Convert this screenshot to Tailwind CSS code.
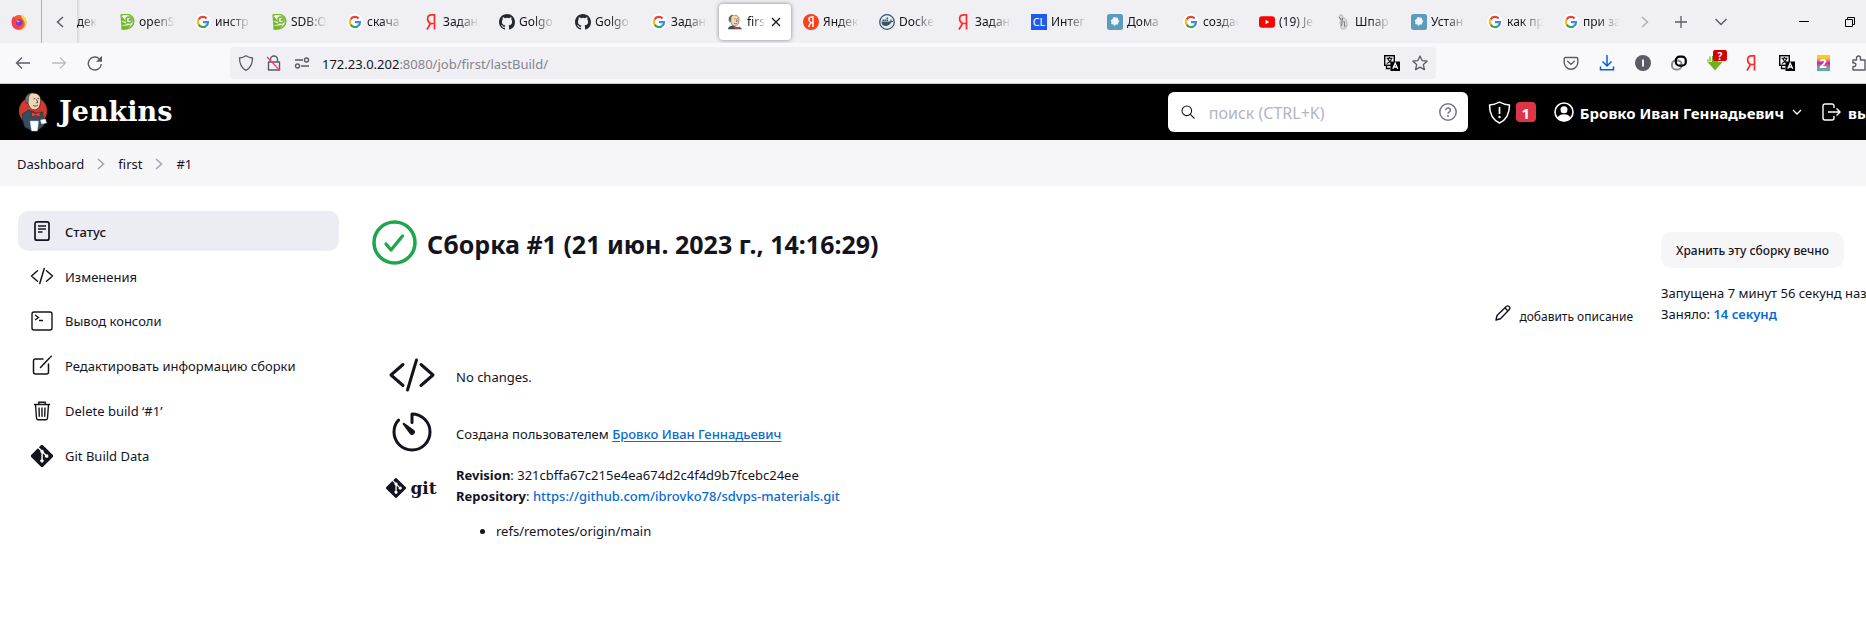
<!DOCTYPE html>
<html lang="ru">
<head>
<meta charset="utf-8">
<title>first #1 [Jenkins]</title>
<script src="https://cdn.jsdelivr.net/npm/@tailwindcss/browser@4"></script>
</head>
<body class="min-h-screen overflow-x-hidden bg-white font-['Noto_Sans',sans-serif] text-[13px] leading-[21px] text-[#14141f]">

<!-- Shared icon definitions -->
<svg class="hidden">
  <symbol id="google" viewBox="0 0 16 16"><circle cx="8" cy="8" r="8" fill="#fff"/><g fill="none" stroke-width="2.2"><path d="M3.7 5.3A5 5 0 0 1 11.6 4.5" stroke="#ea4335"/><path d="M3.7 5.3a5 5 0 0 0 0 5.3" stroke="#fbbc05"/><path d="M3.7 10.6a5 5 0 0 0 7.6 1.2" stroke="#34a853"/><path d="M8 8.2h5a5 5 0 0 1-1.7 3.6" stroke="#4285f4"/></g></symbol>
  <symbol id="suse" viewBox="0 0 16 16"><path d="M1.500 1.500C6-.8 13 0 14.500 5.500c1.500 6-4 10.500-12 9.500" fill="none" stroke="#73ba25" stroke-width="1.500"/><path d="M2.500 15c5 0 8.500-1.500 9-4.500-3 1.500-7 1.500-9.500.5 4.500 0 6-.7 7-1.700C6 9.500 3.500 8.500 2 6.500c2.500 1 4 1.200 4.500.5C5 5 4.500 3.500 1.500 1.500z" fill="#73ba25"/><circle cx="10" cy="6" r="3" fill="none" stroke="#73ba25" stroke-width="1.500"/><circle cx="10.800" cy="5.800" r="1.300" fill="#73ba25"/></symbol>
  <symbol id="ya" viewBox="0 0 16 16"><path d="M11.500 15.500V.9H8.600C6 .9 4.600 2.400 4.600 4.900c0 2.100.9 3.300 2.900 4.600L4 15.500M11.500 9.500H7.600" fill="none" stroke="#ff2a2a" stroke-width="1.700"/></symbol>
  <symbol id="github" viewBox="0 0 16 16"><path fill="#24292f" d="M8 0C3.580 0 0 3.580 0 8c0 3.540 2.290 6.530 5.470 7.590.4.070.55-.17.55-.38 0-.19-.01-.82-.01-1.490-2.010.37-2.530-.49-2.690-.94-.09-.23-.48-.94-.82-1.130-.28-.15-.68-.52-.01-.53.63-.01 1.080.58 1.230.82.72 1.210 1.870.87 2.330.66.07-.52.28-.87.51-1.070-1.780-.2-3.640-.89-3.640-3.950 0-.87.31-1.590.82-2.150-.08-.2-.36-1.020.08-2.120 0 0 .67-.21 2.200.82a7.500 7.500 0 0 1 4 0c1.530-1.040 2.200-.82 2.200-.82.44 1.100.16 1.920.08 2.120.51.56.82 1.270.82 2.150 0 3.070-1.870 3.750-3.650 3.950.29.25.54.73.54 1.480 0 1.070-.01 1.930-.01 2.200 0 .21.15.46.55.38A8 8 0 0 0 16 8c0-4.420-3.580-8-8-8z"/></symbol>
  <symbol id="blue" viewBox="0 0 16 16"><rect width="16" height="16" rx="2.500" fill="#5c9bbb"/><path d="M7 2.800l1.500.8 2-.2.6 2L12.300 7l-1 1.500-.2 2-2 .1L7.400 12l-1.200-1.400-2-.5.3-2L3.600 6.500l1.700-1.200z" fill="#e9f6fa"/></symbol>
  <symbol id="translate" viewBox="0 0 16 16"><rect x=".7" y=".7" width="9.600" height="9.600" fill="none" stroke="#000" stroke-width="1.400"/><path d="M2.500 3.200h6M5.500 2v1M7.500 3.500c-.5 2.500-2 4-4.700 5M3.800 3.800C4.500 5.800 6 7 8.200 8" fill="none" stroke="#000" stroke-width="1.100"/><path d="M2.500 10.500v3h4" fill="none" stroke="#000" stroke-width="1.300"/><rect x="6.500" y="6.500" width="9.500" height="9.500" fill="#000"/><path d="M8.800 13.800l2.400-5.600 2.500 5.600M9.700 12h3" fill="none" stroke="#fff" stroke-width="1.300"/></symbol>
  <symbol id="code" viewBox="0 0 512 512"><path d="M160 368L32 256l128-112M352 368l128-112-128-112M304 96l-96 320" fill="none" stroke="currentColor" stroke-linecap="round" stroke-linejoin="round" stroke-width="32"/></symbol>
  <symbol id="chev" viewBox="0 0 8 12"><path d="M1 1l5.500 5L1 11" fill="none" stroke="currentColor" stroke-width="1.500"/></symbol>
  <symbol id="git" viewBox="0 0 92 92"><path fill="currentColor" d="M90.200 41.900L50 1.800a6 6 0 0 0-8.400 0l-8.300 8.400 10.500 10.500a7 7 0 0 1 8.900 9l10.200 10.200a7 7 0 1 1-4.200 4L49.200 34.400v25a7 7 0 1 1-5.800-.2V33.900a7 7 0 0 1-3.800-9.300L29.200 14.300 1.800 41.700a6 6 0 0 0 0 8.400l40.100 40.100a6 6 0 0 0 8.400 0l39.900-39.900a6 6 0 0 0 0-8.400"/></symbol>
  <symbol id="butlerhead" viewBox="0 0 30 22"><path d="M8 10C6 3 9-.5 16 .8c6 .7 8 5 7 10.200-.3 5-2.500 9-7 9-5 0-6.500-5-8-10z" fill="#f0d6b7" stroke="#2b2320" stroke-width=".8"/><path d="M7.500 13C4 9 5 2 12 1.200c-3 2-2.500 5-3 7.300 0 1.800.2 3-1.500 4.500z" fill="#76726f" stroke="#2b2320" stroke-width=".6"/><path d="M15 7.500l2-.7M19.500 7l2 .3M18.500 8l1.500 3.500-2 .6M14.500 15c2 1.200 4 .8 5.500-.4" fill="none" stroke="#2b2320" stroke-width=".9"/></symbol>
</svg>

<!-- Browser tab strip -->
<div class="flex h-[43px] items-stretch overflow-hidden bg-[#f0eff4] text-xs text-[#15141a]">
  <div class="flex w-[42px] shrink-0 items-center justify-center border-r border-[#b0b0b4]">
    <svg class="mr-1 size-4" viewBox="0 0 16 16"><circle cx="8" cy="8.500" r="7.400" fill="#ff5a2c"/><path d="M10 .3c3.500 2 6 4.500 5.500 8.800C15 13 12 16 8 16c5-1 7-5 5-9-1-2-3-3-3-6.700z" fill="#ffd83a"/><path d="M.8 6c.3-1.800 1-3 2-3.800C3 3.500 4 4 5.500 4.200L4 7.500C3.500 11 6 12.500 8.500 12 11 15 5 16.500 2.500 13.500 1 11.500.5 8 .8 6z" fill="#ff3a50"/><circle cx="8.200" cy="8.500" r="3.400" fill="#7a3bdc"/><path d="M5 6.500c1.500-1 3 .3 4.200.6-.3 1-1.600 1.200-2.200 1.700z" fill="#ff9a2a"/></svg>
  </div>
  <button aria-label="Прокрутить назад" class="flex w-[35px] shrink-0 items-center justify-center text-[#5b5b66]"><svg class="h-3 w-2 -scale-x-100"><use href="#chev"/></svg></button>
  <div class="flex w-8 shrink-0 items-center bg-linear-to-r from-[#d6d5da] to-[#f0eff4] to-10%"><span class="w-5 overflow-hidden whitespace-nowrap mask-r-from-20%" dir="rtl">ндек</span></div>
  <div role="tablist" class="flex shrink-0 items-center">
    <div role="tab" class="flex w-[76px] items-center gap-1 pl-[10px]"><svg class="size-4 shrink-0"><use href="#suse"/></svg><span class="w-9 overflow-hidden whitespace-nowrap mask-r-from-40%">openS</span></div>
    <div role="tab" class="flex w-[76px] items-center gap-1 pl-[10px]"><svg class="size-4 shrink-0"><use href="#google"/></svg><span class="w-9 overflow-hidden whitespace-nowrap mask-r-from-40%">инстр</span></div>
    <div role="tab" class="flex w-[76px] items-center gap-1 pl-[10px]"><svg class="size-4 shrink-0"><use href="#suse"/></svg><span class="w-9 overflow-hidden whitespace-nowrap mask-r-from-40%">SDB:O</span></div>
    <div role="tab" class="flex w-[76px] items-center gap-1 pl-[10px]"><svg class="size-4 shrink-0"><use href="#google"/></svg><span class="w-9 overflow-hidden whitespace-nowrap mask-r-from-40%">скача</span></div>
    <div role="tab" class="flex w-[76px] items-center gap-1 pl-[10px]"><svg class="size-4 shrink-0"><use href="#ya"/></svg><span class="w-9 overflow-hidden whitespace-nowrap mask-r-from-40%">Задан</span></div>
    <div role="tab" class="flex w-[76px] items-center gap-1 pl-[10px]"><svg class="size-4 shrink-0"><use href="#github"/></svg><span class="w-9 overflow-hidden whitespace-nowrap mask-r-from-40%">Golgo</span></div>
    <div role="tab" class="flex w-[76px] items-center gap-1 pl-[10px]"><svg class="size-4 shrink-0"><use href="#github"/></svg><span class="w-9 overflow-hidden whitespace-nowrap mask-r-from-40%">Golgo</span></div>
    <div role="tab" class="flex w-[76px] items-center gap-1 pl-[10px]"><svg class="size-4 shrink-0"><use href="#google"/></svg><span class="w-9 overflow-hidden whitespace-nowrap mask-r-from-40%">Задан</span></div>
    <div role="tab" aria-selected="true" class="mx-0.5 flex h-9 w-[72px] items-center gap-1 rounded bg-white pl-2 shadow-[0_0_4px_rgba(0,0,0,0.45)]"><svg class="size-4 shrink-0" viewBox="3 0 24 22"><path d="M4 22l2-4 6-2 5 3 5-1 4 4z" fill="#335061"/><use href="#butlerhead" width="28" height="19"/><path d="M14 18l4 1 4-1v4l-4-1-4 1z" fill="#d33833"/></svg><span class="w-[19px] overflow-hidden whitespace-nowrap mask-r-from-30%">first</span><button aria-label="Закрыть вкладку"><svg class="size-3" viewBox="0 0 12 12"><path d="M2 2l8 8M10 2l-8 8" stroke="#15141a" stroke-width="1.300"/></svg></button></div>
    <div role="tab" class="flex w-[76px] items-center gap-1 pl-[10px]"><svg class="size-4 shrink-0" viewBox="0 0 16 16"><circle cx="8" cy="8" r="8" fill="#fc3f1d"/><path d="M10 13V3H8.500C6.800 3 5.900 4 5.900 5.500c0 1.300.6 2 1.800 2.900L5.600 13M10 8.700H8" fill="none" stroke="#fff" stroke-width="1.500"/></svg><span class="w-9 overflow-hidden whitespace-nowrap mask-r-from-40%">Яндек</span></div>
    <div role="tab" class="flex w-[76px] items-center gap-1 pl-[10px]"><svg class="size-4 shrink-0" viewBox="0 0 16 16"><circle cx="8" cy="8" r="7.300" fill="#e4edf2" stroke="#3c5569" stroke-width="1.300"/><path d="M2.500 7.500h8.600c.4-1 .3-1.600.8-2.200.7.5.9 1 .9 1.600.6 0 1 0 1.400.3-.5.8-1 1-2 1.100C11 11 9 12 6.800 12 4 12 2.500 10.500 2.500 7.500zM3.500 5.500h1.600V7H3.500zM5.500 5.500h1.600V7H5.500zM7.500 5.500h1.600V7H7.500zM7.500 3.500h1.600V5H7.500z" fill="#3c5569"/></svg><span class="w-9 overflow-hidden whitespace-nowrap mask-r-from-40%">Docke</span></div>
    <div role="tab" class="flex w-[76px] items-center gap-1 pl-[10px]"><svg class="size-4 shrink-0"><use href="#ya"/></svg><span class="w-9 overflow-hidden whitespace-nowrap mask-r-from-40%">Задан</span></div>
    <div role="tab" class="flex w-[76px] items-center gap-1 pl-[10px]"><span class="flex size-4 shrink-0 items-center justify-center bg-[#1f5bea] text-[11px] leading-4 text-white">CL</span><span class="w-9 overflow-hidden whitespace-nowrap mask-r-from-40%">Интег</span></div>
    <div role="tab" class="flex w-[76px] items-center gap-1 pl-[10px]"><svg class="size-4 shrink-0"><use href="#blue"/></svg><span class="w-9 overflow-hidden whitespace-nowrap mask-r-from-40%">Дома</span></div>
    <div role="tab" class="flex w-[76px] items-center gap-1 pl-[10px]"><svg class="size-4 shrink-0"><use href="#google"/></svg><span class="w-9 overflow-hidden whitespace-nowrap mask-r-from-40%">создае</span></div>
    <div role="tab" class="flex w-[76px] items-center gap-1 pl-[10px]"><svg class="size-4 shrink-0" viewBox="0 0 16 16"><rect y="2.300" width="16" height="11.400" rx="3" fill="#f00"/><path d="M6.500 5.800v4.400L10.300 8z" fill="#fff"/></svg><span class="w-9 overflow-hidden whitespace-nowrap mask-r-from-40%">(19) Je</span></div>
    <div role="tab" class="flex w-[76px] items-center gap-1 pl-[10px]"><svg class="size-4 shrink-0" viewBox="0 0 16 16"><path d="M5 1c2-1 3 1 2.500 3C10 3.500 12 6 12 9c.5 3-1 6-3.500 6S5 13 6 11c-1-1-1.500-3 0-5C4 5 4 2 5 1z" fill="#dcdcdc" stroke="#999" stroke-width=".7"/><path d="M7.500 4l-1 8M9 7l1 6M4 3l2.500 3" stroke="#666" stroke-width=".9"/></svg><span class="w-9 overflow-hidden whitespace-nowrap mask-r-from-40%">Шпар</span></div>
    <div role="tab" class="flex w-[76px] items-center gap-1 pl-[10px]"><svg class="size-4 shrink-0"><use href="#blue"/></svg><span class="w-9 overflow-hidden whitespace-nowrap mask-r-from-40%">Устан</span></div>
    <div role="tab" class="flex w-[76px] items-center gap-1 pl-[10px]"><svg class="size-4 shrink-0"><use href="#google"/></svg><span class="w-9 overflow-hidden whitespace-nowrap mask-r-from-40%">как пр</span></div>
    <div role="tab" class="flex w-[76px] items-center gap-1 pl-[10px]"><svg class="size-4 shrink-0"><use href="#google"/></svg><span class="w-9 overflow-hidden whitespace-nowrap mask-r-from-40%">при за</span></div>
  </div>
  <div class="flex grow items-center pl-3 text-[#5b5b66]">
    <button aria-label="Прокрутить вперёд" class="mr-[26px] text-[#b0b0b5]"><svg class="h-3 w-2"><use href="#chev"/></svg></button>
    <button aria-label="Новая вкладка" class="mr-7"><svg class="size-3" viewBox="0 0 12 12"><path d="M6 0v12M0 6h12" stroke="currentColor" stroke-width="1.300"/></svg></button>
    <button aria-label="Список вкладок"><svg class="h-2 w-3" viewBox="0 0 12 8"><path d="M.5 1L6 6.500 11.500 1" fill="none" stroke="currentColor" stroke-width="1.400"/></svg></button>
  </div>
  <div class="flex items-center gap-9 pr-[11px] text-black">
    <button aria-label="Свернуть"><svg class="size-[10px]" viewBox="0 0 10 10"><path d="M0 4.500h10" stroke="currentColor"/></svg></button>
    <button aria-label="Восстановить"><svg class="size-[10px]" viewBox="0 0 10 10"><path d="M.5 2.500h7v7h-7zM2.500 2.500v-2h7v7h-2" fill="none" stroke="currentColor"/></svg></button>
  </div>
</div>

<!-- Browser toolbar -->
<div class="flex h-[41px] items-center overflow-hidden border-b border-[#cccccf] bg-[#f9f9fb] pl-[15px] text-[#5b5b66]">
  <div class="flex w-[215px] shrink-0 items-center gap-5">
    <button aria-label="Назад"><svg class="size-4" viewBox="0 0 16 16"><path d="M15 8H1.500M7 2.500L1.500 8 7 13.500" fill="none" stroke="currentColor" stroke-width="1.300"/></svg></button>
    <button aria-label="Вперёд" class="text-[#bcbcc1]"><svg class="size-4" viewBox="0 0 16 16"><path d="M1 8h13.500M9 2.500L14.500 8 9 13.500" fill="none" stroke="currentColor" stroke-width="1.300"/></svg></button>
    <button aria-label="Обновить"><svg class="size-4" viewBox="0 0 16 16"><path d="M14.300 9A6.500 6.500 0 1 1 12.500 4" fill="none" stroke="currentColor" stroke-width="1.400"/><path d="M15 .8v6H9z" fill="currentColor"/></svg></button>
  </div>
  <div class="flex h-8 min-w-0 grow items-center gap-3 rounded bg-[#f0eff4] px-2">
    <svg class="size-4 shrink-0" viewBox="0 0 16 16"><path d="M8 .8c2 1.400 4 2 6.500 2.200C14.500 9 12.500 13 8 15.300 3.500 13 1.500 9 1.500 3 4 2.800 6 2.200 8 .8z" fill="none" stroke="currentColor" stroke-width="1.300"/></svg>
    <svg class="size-4 shrink-0" viewBox="0 0 16 16"><path d="M4.500 7V4.500a3.500 3.500 0 0 1 7 0V7M2.500 7h11v8h-11z" fill="none" stroke="currentColor" stroke-width="1.400" stroke-linejoin="round"/><path d="M1 2l13 13.500" stroke="#ff3b6b" stroke-width="1.300"/></svg>
    <svg class="size-4 shrink-0" viewBox="0 0 16 16"><g fill="none" stroke="currentColor" stroke-width="1.400"><path d="M1 5h8M7 11h8"/><circle cx="12.500" cy="5" r="2"/><circle cx="3.500" cy="11" r="2"/></g></svg>
    <p class="grow whitespace-nowrap pt-0.5 text-[13px] text-[#85848c]"><span class="text-[#15141a]">172.23.0.202</span>:8080/job/first/lastBuild/</p>
    <svg class="size-4 shrink-0"><use href="#translate"/></svg>
    <svg class="size-4 shrink-0" viewBox="0 0 16 16"><path d="M8 1l2.100 4.600 5 .6-3.700 3.400 1 5L8 12.100l-4.400 2.500 1-5L.9 6.200l5-.6z" fill="none" stroke="currentColor" stroke-width="1.300" stroke-linejoin="round"/></svg>
  </div>
  <div class="-mr-px flex w-[431px] shrink-0 items-center justify-end gap-5">
    <svg class="size-4 shrink-0" viewBox="0 0 16 16"><path d="M2.500 2.500h11c.8 0 1.300.5 1.300 1.300v3.700a6.800 6.800 0 0 1-13.600 0V3.800c0-.8.5-1.300 1.300-1.300zM4.700 6.300L8 9.400l3.300-3.100" fill="none" stroke="currentColor" stroke-width="1.400" stroke-linecap="round"/></svg>
    <svg class="size-4 shrink-0" viewBox="0 0 16 16"><path d="M8 0v10.500M3.500 6.500L8 11l4.500-4.500M1.500 11.500v3.300h13v-3.300" fill="none" stroke="#0061e0" stroke-width="1.500"/></svg>
    <svg class="size-4 shrink-0" viewBox="0 0 16 16"><circle cx="8" cy="8" r="8" fill="#5b5b66"/><path d="M8 4.500v7" stroke="#fff" stroke-width="1.800"/></svg>
    <svg class="size-4 shrink-0" viewBox="0 0 16 16"><rect x="1" y="5.500" width="9.500" height="9" rx="3.800" fill="none" stroke="#8b8b90" stroke-width="2"/><rect x="4.800" y="1.700" width="10" height="9" rx="3.800" fill="none" stroke="#000" stroke-width="2.200"/></svg>
    <div class="relative size-4 shrink-0"><svg class="size-4" viewBox="0 0 16 16"><path d="M5 1h6v6h4.500L8 15.500.5 7H5z" fill="#6eb31c"/><path d="M1 4.500v2M3 1.500v5" stroke="#6eb31c" stroke-width="1.300"/></svg><span class="absolute -top-[5px] left-[6px] flex h-[11px] w-[14px] items-center justify-center rounded-xs bg-[#d70000] text-[10px] font-bold leading-none text-white">?</span></div>
    <svg class="size-4 shrink-0"><use href="#ya"/></svg>
    <svg class="size-4 shrink-0"><use href="#translate"/></svg>
    <span class="flex size-4 shrink-0 items-center justify-center"><span class="h-4 w-[13px] bg-linear-to-b from-[#ffd000] from-15% via-[#c4149a] to-[#20c0a0] text-center text-[13px] font-bold leading-4 text-white">2</span></span>
    <svg class="size-4 shrink-0" viewBox="0 0 16 16"><path d="M2 5h3.500V3a2 2 0 0 1 4 0v2h4.500v10H2v-3.500h1.500a1.800 1.800 0 0 0 0-3.500H2z" fill="none" stroke="currentColor" stroke-width="1.400" stroke-linejoin="round"/></svg>
  </div>
</div>

<!-- Jenkins header -->
<header class="flex h-14 items-center overflow-hidden whitespace-nowrap bg-black pl-[18px] text-white">
  <a href="#" class="flex items-center gap-[11px]">
    <svg class="h-10 w-[30px]" viewBox="0 0 29 40"><circle cx="14.500" cy="19" r="14" fill="#d33833"/><path d="M4 22l6-4 8 3 6-1 1 6 2 3-2 5-4 3-9 1-6-3-2-8z" fill="#335061" stroke="#1b2b36" stroke-width=".6"/><use href="#butlerhead" x="2" y="0" width="26" height="20"/><path d="M13 20l4 1.500 4.500-1.500v5L17 23.500 13 25z" fill="#ef3d3a" stroke="#711c1c" stroke-width=".6"/><path d="M11.500 29h8.500l-1 10h-6zM22 28l5-1 1 4-5 1z" fill="#fff" stroke="#b8b8b8" stroke-width=".5"/></svg>
    <span class="font-['DejaVu_Serif',serif] text-[27px] font-bold leading-10">Jenkins</span>
  </a>
  <form class="ml-auto mr-5 flex h-10 w-[300px] shrink-0 items-center rounded-md bg-white pl-[13px] pr-[11px]">
    <svg class="size-[14px] shrink-0 text-[#14141f]" viewBox="0 0 14 14"><circle cx="5.800" cy="5.800" r="4.800" fill="none" stroke="currentColor" stroke-width="1.100"/><path d="M9.300 9.300L13.500 13.500" stroke="currentColor" stroke-width="1.100"/></svg>
    <input type="search" aria-label="поиск" placeholder="поиск (CTRL+K)" class="min-w-0 grow bg-transparent pl-[14px] pt-0.5 text-[16px] text-[#14141f] outline-none placeholder:text-[#b4b4c2]">
    <a href="#" aria-label="Справка" class="text-[#73738c]"><svg class="size-[18px]" viewBox="0 0 18 18"><circle cx="9" cy="9" r="8.200" fill="none" stroke="currentColor" stroke-width="1.500"/><path d="M6.800 7.200c0-3 4.600-2.800 4.600 0 0 1.700-2.400 1.700-2.400 3.600" fill="none" stroke="currentColor" stroke-width="1.500"/><circle cx="9" cy="13" r="1" fill="currentColor"/></svg></a>
  </form>
  <button class="mr-[18px] flex shrink-0 items-center gap-[5px]"><svg class="h-[23px] w-[23px]" viewBox="0 0 23 23"><path d="M11.500 1.200C15 3 18 3.800 21.500 4 21.500 13 18 19 11.500 22 5 19 1.500 13 1.500 4 5 3.800 8 3 11.500 1.200z" fill="none" stroke="#fff" stroke-width="1.500" stroke-linejoin="round"/><path d="M11.500 6v7" stroke="#fff" stroke-width="1.700"/><circle cx="11.500" cy="16" r="1.200" fill="#fff"/></svg><span class="h-5 w-5 rounded bg-[#dc3545] text-center text-[15px] font-bold leading-[22px]">1</span></button>
  <a href="#" class="flex shrink-0 items-center gap-[6px] text-[15px] font-bold"><svg class="size-5" viewBox="0 0 20 20"><circle cx="10" cy="10" r="9" fill="none" stroke="#fff" stroke-width="1.600"/><circle cx="10" cy="7.700" r="3.500" fill="#fff"/><path d="M3.500 15.500c2-4.500 11-4.500 13 0L14 18.500 10 19.500 6 18.500z" fill="#fff"/></svg><span class="pt-0.5">Бровко Иван Геннадьевич</span></a>
  <button aria-label="Меню пользователя" class="ml-2 mr-5 shrink-0"><svg class="h-[6px] w-[10px]" viewBox="0 0 10 6"><path d="M1 1l4 4 4-4" fill="none" stroke="#fff" stroke-width="1.300"/></svg></button>
  <a href="#" class="flex w-11 shrink-0 items-center gap-[7px] overflow-hidden text-[15px] font-bold"><svg class="h-[18px] w-[19px] shrink-0" viewBox="0 0 19 18"><path d="M12 5V3a2 2 0 0 0-2-2H3a2 2 0 0 0-2 2v12a2 2 0 0 0 2 2h7a2 2 0 0 0 2-2v-2M6 9h12M14.500 5.500L18 9l-3.500 3.500" fill="none" stroke="#fff" stroke-width="1.400"/></svg><span class="pt-0.5">выход</span></a>
</header>

<!-- Breadcrumbs -->
<nav aria-label="Путь" class="flex h-[46px] items-center bg-[#f6f6f9] px-[17px] pt-0.5">
  <a href="#">Dashboard</a><svg class="mx-[13px] h-3 w-2 text-[#a3a3b5]"><use href="#chev"/></svg>
  <a href="#">first</a><svg class="mx-[13px] h-3 w-2 text-[#a3a3b5]"><use href="#chev"/></svg>
  <a href="#">#1</a>
</nav>

<div class="flex pl-[18px] pt-[25px]">
  <!-- Side panel -->
  <nav aria-label="Задачи" class="flex w-[321px] shrink-0 flex-col gap-[5px]">
    <a href="#" class="flex h-10 items-center gap-[11px] rounded-[10px] bg-[#ecedf3] px-3 font-medium"><svg class="size-6" viewBox="0 0 24 24"><rect x="5" y="2.800" width="14" height="18.400" rx="2" fill="none" stroke="currentColor" stroke-width="1.700"/><path d="M8 7h8M8 10h8M8 13h4.500" stroke="currentColor" stroke-width="1.400"/></svg><span class="pt-0.5">Статус</span></a>
    <a href="#" class="flex h-10 items-center gap-[11px] px-3"><svg class="size-6"><use href="#code"/></svg><span class="pt-0.5">Изменения</span></a>
    <a href="#" class="flex h-10 items-center gap-[11px] px-3"><svg class="size-6" viewBox="0 0 24 24"><rect x="2" y="3" width="20" height="18" rx="2" fill="none" stroke="currentColor" stroke-width="1.400"/><path d="M5 6l3.500 2.500L5 11M9 11.500h4" fill="none" stroke="currentColor" stroke-width="1.400"/></svg>Вывод консоли</a>
    <a href="#" class="flex h-10 items-center gap-[11px] px-3"><svg class="size-6" viewBox="0 0 24 24"><path d="M13 5H5.500A2 2 0 0 0 3.500 7v11a2 2 0 0 0 2 2h11a2 2 0 0 0 2-2v-8M10.500 13.500l9-9.500M20.500 3l.8-.8" fill="none" stroke="currentColor" stroke-width="1.500" stroke-linecap="round"/></svg>Редактировать информацию сборки</a>
    <a href="#" class="flex h-10 items-center gap-[11px] px-3"><svg class="size-6" viewBox="0 0 24 24"><path d="M5.500 5.500l1 13.800a1.500 1.500 0 0 0 1.500 1.400h8a1.500 1.500 0 0 0 1.500-1.400l1-13.800M4 5.500h16M8.800 5.500V3.300h6.400v2.200M12 8.500v9.300M9 8.500l.3 9.300M15 8.500l-.3 9.300" fill="none" stroke="currentColor" stroke-width="1.400"/></svg>Delete build ‘#1’</a>
    <a href="#" class="flex h-10 items-center gap-[11px] px-3"><svg class="size-6" viewBox="-3 -3 98 98"><use href="#git" width="92" height="92"/></svg>Git Build Data</a>
  </nav>

  <!-- Build details -->
  <main class="flex min-w-0 grow pl-[33px]">
    <div class="min-w-0 grow">
      <h1 class="flex items-center gap-[10px] pt-[6px] text-[25px] font-bold leading-[46px]"><svg class="size-[45px]" viewBox="0 0 45 45"><circle cx="22.500" cy="22.500" r="20.500" fill="none" stroke="#1ea64b" stroke-width="3.500"/><path d="M14 24l5 6 11.500-14" fill="none" stroke="#1ea64b" stroke-width="3.300" stroke-linecap="round" stroke-linejoin="round"/></svg><span class="pt-1">Сборка #1 (21 июн. 2023 г., 14:16:29)</span></h1>
      <div class="mt-[38px] flex justify-end">
        <a href="#" class="flex items-center gap-2 text-xs"><svg class="mb-1 size-4" viewBox="0 0 16 16"><path d="M1 15l1-4.500L11.500 1.300c1.600-1.200 4.300 1 3 3L5.500 13.800zM10 3l3 3" fill="none" stroke="currentColor" stroke-width="1.400" stroke-linejoin="round"/></svg><span class="pt-1">добавить описание</span></a>
      </div>
      <div class="mt-6 grid grid-cols-[79px_1fr] items-center gap-x-[5px]">
        <div class="flex h-[52px] items-center justify-center"><svg class="size-12"><use href="#code"/></svg></div>
        <p class="pt-1">No changes.</p>
        <div class="mt-[5px] flex h-[52px] items-center justify-center"><svg class="size-12" viewBox="0 0 512 512"><path d="M112.900 129C81.900 160.900 64 206.100 64 256.300 64 362 149.700 448 256 448s192-86 192-192S362 64 256 64v90" fill="none" stroke="currentColor" stroke-linecap="round" stroke-linejoin="round" stroke-width="32"/><path d="M233.400 278.600l-74.600-103a11.300 11.300 0 0 1 15.800-15.800l103 74.600a31.200 31.200 0 1 1-44.200 44.200z" fill="currentColor"/></svg></div>
        <p class="mt-[5px] pt-1">Создана пользователем <a href="#" class="font-medium text-[#0b6ad4] underline underline-offset-2">Бровко Иван Геннадьевич</a></p>
        <div class="flex items-center justify-center gap-1 self-start pt-[18px]"><svg class="size-5" viewBox="0 0 92 92"><use href="#git"/></svg><span class="font-['DejaVu_Serif',serif] text-[17px] font-bold leading-6">git</span></div>
        <div class="self-start pt-[7px]">
          <p><b>Revision</b>: 321cbffa67c215e4ea674d2c4f4d9b7fcebc24ee</p>
          <p><b>Repository</b>: <a href="#" class="font-medium text-[#0b6ad4]">https://github.com/ibrovko78/sdvps-materials.git</a></p>
          <ul class="mt-[14px] list-disc pl-10"><li>refs/remotes/origin/main</li></ul>
        </div>
      </div>
    </div>
    <aside class="ml-7 w-[205px] shrink-0 overflow-hidden whitespace-nowrap pt-[21px]">
      <button class="h-9 w-[183px] rounded-[10px] bg-[#f6f6f9] pt-0.5 text-xs font-medium">Хранить эту сборку вечно</button>
      <p class="mt-[15px]">Запущена 7 минут 56 секунд назад</p>
      <p>Заняло: <a href="#" class="font-semibold text-[#0b6ad4]">14 секунд</a></p>
    </aside>
  </main>
</div>
</body>
</html>
